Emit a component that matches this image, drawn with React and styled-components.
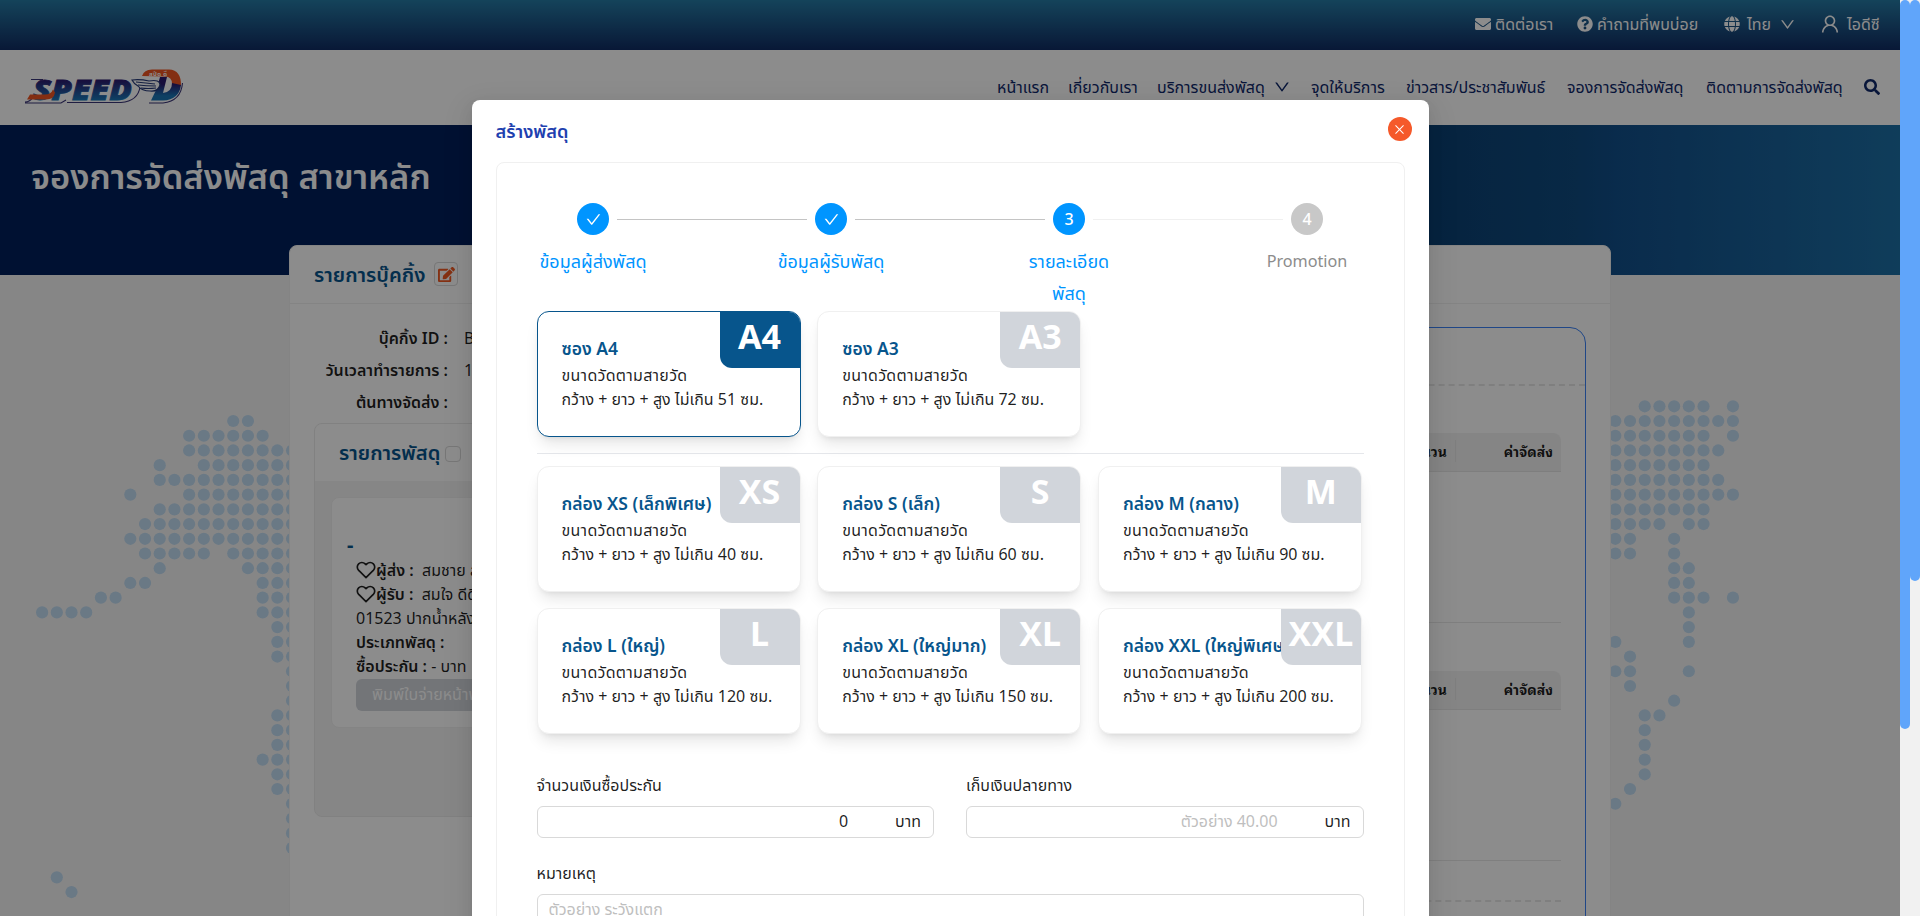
import React from "react";
import styled, { createGlobalStyle, css } from "styled-components";
import { FaEnvelope, FaQuestionCircle, FaGlobe, FaSearch, FaEdit } from "react-icons/fa";
import { AiOutlineDown, AiOutlineUser, AiOutlineCheck, AiOutlineClose } from "react-icons/ai";
import { FiHeart } from "react-icons/fi";

const Global = createGlobalStyle`
  *, *::before, *::after { box-sizing: border-box; }
  body {
    margin: 0;
    overflow: hidden;
    font-family: "Noto Sans", "Noto Sans Thai", sans-serif;
    font-size: 16px;
    color: rgba(0, 0, 0, 0.88);
  }
`;

const Shell = styled.div`
  display: flex;
  width: 1920px;
  height: 916px;
  overflow: hidden;
`;
const Page = styled.div`
  position: relative;
  width: 1900px;
  height: 916px;
  overflow: hidden;
  background: #f5f5f5;
`;

/* ---------- header ---------- */
const TopBar = styled.div`
  height: 50px;
  display: flex;
  justify-content: flex-end;
  align-items: center;
  padding: 0 20px 2px 0;
  gap: 23px;
  color: #fff;
  background: linear-gradient(180deg, #267ba5 0%, #102c63 100%);
`;
const TopItem = styled.div`
  display: flex;
  align-items: center;
  gap: ${(p) => p.$gap || 4}px;
`;
const Label = styled.span`
  display: inline-block;
  width: ${(p) => (p.$w ? p.$w + "px" : "auto")};
  white-space: nowrap;
  line-height: 24px;
`;
const NavBar = styled.div`
  height: 75px;
  display: flex;
  align-items: center;
  justify-content: space-between;
  padding: 0 20px 0 23px;
  background: #fff;
  color: #10286a;
`;
const NavLinks = styled.div`
  display: flex;
  align-items: center;
  gap: 20px;
  padding-bottom: 2px;
`;
const Hero = styled.div`
  height: 150px;
  padding: 24px 31px;
  color: #fff;
  font-size: 34.5px;
  font-weight: 600;
  line-height: 54px;
  white-space: nowrap;
  background: linear-gradient(90deg, #00205b 0%, #00205b 25%, #0b4073 75%, #0f4b80 83%, #124f8a 85%, #1d6fa5 100%);
`;

/* ---------- page body ---------- */
const DotMap = styled.svg`
  position: absolute;
  left: 0;
  top: 275px;
`;
const Booking = styled.div`
  position: relative;
  width: 1322px;
  height: 720px;
  margin: -30px 0 0 289px;
  background: #fff;
  border: 1px solid #f0f0f0;
  border-radius: 8px;
`;
const BookingHead = styled.div`
  height: 58px;
  display: flex;
  align-items: center;
  gap: 10px;
  padding: 0 0 1px 24px;
  border-bottom: 1px solid #f0f0f0;
  color: #07558c;
  font-size: 20.2px;
  font-weight: 600;
`;
const EditButton = styled.span`
  width: 24px;
  height: 24px;
  display: flex;
  align-items: center;
  justify-content: center;
  border: 1px solid #d9d9d9;
  border-radius: 4px;
  color: #f15a24;
  font-size: 17px;
`;
const Columns = styled.div`
  display: flex;
  justify-content: space-between;
  padding: 18px 24px 0 24px;
`;
const LeftCol = styled.div`
  width: 560px;
`;
const Field = styled.div`
  height: 32px;
  display: flex;
  gap: 16px;
  line-height: 32px;
  white-space: nowrap;
`;
const FieldName = styled.div`
  width: 134px;
  text-align: right;
  font-weight: 600;
`;
const ParcelBox = styled.div`
  height: 394px;
  margin-top: 5px;
  border: 1px solid #ebebeb;
  border-radius: 8px;
  background: #f5f5f5;
  overflow: hidden;
`;
const ParcelHead = styled.div`
  height: 57px;
  display: flex;
  align-items: center;
  gap: 4px;
  padding: 0 0 2px 24px;
  background: #fff;
  color: #07558c;
  font-size: 20.2px;
  font-weight: 600;
`;
const CheckBox = styled.span`
  width: 16px;
  height: 16px;
  margin-top: 4px;
  border: 1px solid #d9d9d9;
  border-radius: 4px;
`;
const Parcel = styled.div`
  height: 231px;
  margin: 16px;
  padding: 36px 23px 0;
  background: #fff;
  border: 1px solid #f0f0f0;
  border-radius: 8px;
`;
const ParcelName = styled.div`
  height: 24px;
  margin-left: -8px;
  line-height: 22px;
  font-size: 20px;
  font-weight: 700;
  color: #07558c;
`;
const Line = styled.div`
  height: 24px;
  display: flex;
  align-items: center;
  padding-left: 1px;
  line-height: 24px;
  white-space: nowrap;
  b { font-weight: 600; }
`;
const PrintButton = styled.div`
  height: 32px;
  width: 260px;
  margin: 1px 0 0 1px;
  padding-left: 16px;
  border-radius: 6px;
  background: #d1d5db;
  color: #fff;
  line-height: 30px;
  white-space: nowrap;
`;
const RightCol = styled.div`
  width: 700px;
  height: 700px;
  margin-top: 5px;
  border: 1px solid #3b82f6;
  border-radius: 16px;
`;
const Dashed = styled.div`
  height: ${(p) => p.$h}px;
  margin-right: ${(p) => p.$right || 0}px;
  border-bottom: 2px dashed #e8e8e8;
`;
const Table = styled.div`
  height: 190px;
  margin: ${(p) => p.$top}px 24px 0;
  border-bottom: 1px solid #e8e8e8;
`;
const TableHead = styled.div`
  height: 39px;
  display: flex;
  align-items: center;
  justify-content: flex-end;
  padding-bottom: 2px;
  background: #f3f3f3;
  border-bottom: 1px solid #e6e6e6;
  border-radius: 8px 8px 0 0;
  font-size: 14px;
  font-weight: 700;
  font-family: "Noto Sans Thai Looped", "Noto Serif Thai", "Loma", serif;
`;
const HeadCell = styled.div`
  width: ${(p) => p.$w}px;
  height: 22px;
  padding-right: 8px;
  text-align: right;
  line-height: 22px;
  border-right: ${(p) => (p.$line ? "1px solid #e8e8e8" : "none")};
`;

/* ---------- modal ---------- */
const Mask = styled.div`
  position: absolute;
  inset: 0;
  display: flex;
  justify-content: center;
  align-items: flex-start;
  padding-top: 100px;
  background: rgba(0, 0, 0, 0.45);
`;
const Modal = styled.div`
  width: 957px;
  height: 1100px;
  flex: none;
  padding: 16px 24px;
  border-radius: 8px;
  background: #fff;
  box-shadow: 0 6px 16px 0 rgba(0, 0, 0, 0.08), 0 3px 6px -4px rgba(0, 0, 0, 0.12), 0 9px 28px 8px rgba(0, 0, 0, 0.05);
`;
const ModalHead = styled.div`
  height: 46px;
  display: flex;
  justify-content: space-between;
  color: #1e40af;
  font-size: 18.2px;
  font-weight: 600;
  line-height: 30px;
`;
const CloseButton = styled.span`
  width: 24px;
  height: 24px;
  margin: 1px -7px 0 0;
  display: flex;
  align-items: center;
  justify-content: center;
  border-radius: 50%;
  background: #f5592a;
  color: #fff;
  font-size: 13px;
`;
const Card = styled.div`
  height: 1000px;
  padding: 40px;
  border: 1px solid #f0f0f0;
  border-radius: 8px;
`;
const Steps = styled.div`
  display: flex;
  height: 108px;
  margin-left: -1.5px;
`;
const Step = styled.div`
  width: 116px;
  margin-right: 122px;
  flex: none;
  color: ${(p) => (p.$state === "wait" ? "#8c8c8c" : "#0095ff")};
`;
const StepTop = styled.div`
  display: flex;
  align-items: center;
  width: 300px;
  gap: 8px;
  padding-left: 42px;
  margin-bottom: 10px;
`;
const StepDot = styled.span`
  width: 32px;
  height: 32px;
  display: flex;
  align-items: center;
  justify-content: center;
  border-radius: 50%;
  background: ${(p) => (p.$state === "wait" ? "#c8c8c8" : "#0095ff")};
  color: #fff;
  font-size: 16px;
  font-weight: 500;
`;
const StepLine = styled.span`
  width: 190px;
  height: 1px;
  background: ${(p) => (p.$done ? "#c4c4c4" : "#f0f0f0")};
`;
const StepText = styled.div`
  font-size: ${(p) => (p.$small ? 16.2 : 18)}px;
  line-height: ${(p) => (p.$small ? 33 : 32)}px;
  text-align: center;
  white-space: pre;
`;
const Sizes = styled.div`
  display: grid;
  grid-template-columns: repeat(3, 264px);
  gap: 16px 16.7px;
  ${(p) => p.$divided && css`
    padding-bottom: 16px;
    margin-bottom: 12px;
    border-bottom: 1px solid #e5e7eb;
  `}
`;
const SizeCard = styled.div`
  position: relative;
  height: 126px;
  padding: 23px 0 0 24px;
  background: #fff;
  border: 1px solid ${(p) => (p.$active ? "#07558c" : "#f0f0f0")};
  border-radius: 12px;
  box-shadow: 0 10px 15px -3px rgba(0, 0, 0, 0.1), 0 4px 6px -4px rgba(0, 0, 0, 0.1);
  line-height: 24px;
  white-space: nowrap;
`;
const SizeName = styled.div`
  height: 28px;
  line-height: 27px;
  color: #07558c;
  font-size: 17.5px;
  font-weight: 600;
`;
const SizeNote = styled.div`
  letter-spacing: 0.28px;
`;
const Tag = styled.div`
  position: absolute;
  top: 0;
  right: 0;
  width: 80px;
  height: 56px;
  border-radius: 0 11px 0 12px;
  background: ${(p) => (p.$active ? "#07558c" : "#d1d5db")};
  color: #fff;
  font-size: 34px;
  font-weight: 700;
  line-height: 49px;
  text-align: center;
`;
const FormRow = styled.div`
  display: flex;
  gap: 32px;
  margin-top: ${(p) => p.$top}px;
`;
const FormItem = styled.div`
  flex: 1;
`;
const FormLabel = styled.div`
  height: 37px;
  line-height: 32px;
`;
const Input = styled.div`
  height: ${(p) => p.$h || 32}px;
  display: flex;
  justify-content: ${(p) => (p.$h ? "flex-start" : "flex-end")};
  gap: 47px;
  padding: 0 12px 0 11px;
  border: 1px solid #d9d9d9;
  border-radius: 6px;
  line-height: 29px;
`;
const Hint = styled.span`
  color: #bfbfbf;
`;

/* ---------- scroll bars ---------- */
const Track = styled.div`
  width: 10px;
  height: 916px;
  background: #f1f1f1;
`;
const Thumb = styled.div`
  height: ${(p) => p.$h}px;
  border-radius: 5px;
  background: #60a5fa;
`;

const dotRows = [
  [0, "109-113,115"], [1, "13-14,107-115"], [2, "10-15,107-113,115"], [3, "10-17,107-114"],
  [4, "8,11-17,107-113"], [5, "8-17,107-114"], [6, "6,10-17,107-115"], [7, "8-17,107-113"],
  [8, "7-17,107-110,112-113"], [9, "6-17,107-108,111"], [10, "7-11,13-17,107-108,111"],
  [11, "8,14-17,111-112"], [12, "6-7,15-17,111-112"], [13, "4-5,15-17,111-113,115"],
  [14, "0-3,15-17,112"], [15, "16-17,112"], [16, "16-17,107,112"], [17, "16-17,108"],
  [18, "17,107-108,112"], [19, "17,108"], [20, "17,111"], [21, "16-17,109-110"],
  [22, "16-17,109"], [23, "16-17,109"], [24, "15-17,109"], [25, "16-17,109"],
  [26, "16-17,108"], [27, "17,107"], [28, "17"], [29, "17"], [30, "17"], [32, "1"], [33, "2"],
];
const dots = dotRows.flatMap(([row, spec]) =>
  spec.split(",").flatMap((part) => {
    const [a, b = a] = part.split("-").map(Number);
    return Array.from({ length: b - a + 1 }, (_, i) => ({ row, col: a + i }));
  })
);

function Logo() {
  return (
    <svg width="162" height="44" viewBox="0 0 162 44">
      <defs>
        <linearGradient id="ink" x1="0" y1="0" x2="0" y2="1">
          <stop offset="0.3" stopColor="#2b1a6e" />
          <stop offset="0.8" stopColor="#1b75b5" />
        </linearGradient>
      </defs>
      <path d="M2 36 Q7 36 10 31 M2 37 H38 L43 34 M44 36.500 H98 Q115 35 117 21 M126 37 H140 Q158 35 159.500 17 M8 13.500 H20" fill="none" stroke="#3a3578" strokeWidth="1.1" />
      <path d="M119 10 Q121 3.500 129 3.500 H146 Q158.500 4 158 20 L149 18 Q149 10.500 142 10.500 Z" fill="#ee5522" />
      <path d="M149 17 L158 19 Q156 34 140 34.500 H128 L134 22 L137 11 H144 L140 27 Q149 26 149 17 Z" fill="url(#ink)" />
      <path d="M109 14 q8 -1 17 1 q11 -2 11 4 q-2 7 -10 6 q-8 0 -12 -5 q-4 -2 -6 -6 Z" fill="#fff" stroke="#263a78" strokeWidth="1.2" />
      <path d="M113 16 q10 1 19 2 M115 19 q8 1 18 1 M118 22 q7 1 15 0" fill="none" stroke="#263a78" strokeWidth="1.2" />
      <text x="10" y="33.500" fontFamily="Noto Sans" fontSize="29" fontWeight="900" fontStyle="italic" textLength="99" lengthAdjust="spacingAndGlyphs" fill="url(#ink)" stroke="url(#ink)" strokeWidth="0.8">SPEED</text>
      <path d="M7 28.500 H22 q6 0 8 -5 l2 3 q-1 7 -9 7 H4 Z" fill="#ee5522" />
      <text x="126" y="9.500" fontFamily="Noto Sans Thai" fontSize="6" fontWeight="700" textLength="18" fill="#fff">สปีด ดี</text>
    </svg>
  );
}

function StepItem({ state, n, text, last, done }) {
  return (
    <Step $state={state}>
      <StepTop>
        <StepDot $state={state}>{n || <AiOutlineCheck size={17} />}</StepDot>
        {!last && <StepLine $done={done} />}
      </StepTop>
      <StepText $small={last}>{text}</StepText>
    </Step>
  );
}

function Size({ name, tag, max, active }) {
  return (
    <SizeCard $active={active}>
      <SizeName>{name}</SizeName>
      <SizeNote>ขนาดวัดตามสายวัด</SizeNote>
      <div>กว้าง + ยาว + สูง ไม่เกิน {max} ซม.</div>
      <Tag $active={active}>{tag}</Tag>
    </SizeCard>
  );
}

function CostTable({ top }) {
  return (
    <Table $top={top}>
      <TableHead>
        <HeadCell $w={100} $line>จำนวน</HeadCell>
        <HeadCell $w={105}>ค่าจัดส่ง</HeadCell>
      </TableHead>
    </Table>
  );
}

export default function App() {
  return (
    <Shell>
      <Global />
      <Page>
        <TopBar>
          <TopItem><FaEnvelope /><Label $w={59}>ติดต่อเรา</Label></TopItem>
          <TopItem><FaQuestionCircle /><Label $w={104}>คำถามที่พบบ่อย</Label></TopItem>
          <TopItem $gap={7}><FaGlobe /><Label $w={25}>ไทย</Label><AiOutlineDown size={17} /></TopItem>
          <TopItem $gap={6}><AiOutlineUser size={22} /><Label $w={33}>ไอดีซี</Label></TopItem>
        </TopBar>
        <NavBar>
          <Logo />
          <NavLinks>
            <Label $w={51}>หน้าแรก</Label>
            <Label $w={69}>เกี่ยวกับเรา</Label>
            <TopItem $gap={7}><Label $w={109}>บริการขนส่งพัสดุ</Label><AiOutlineDown size={18} /></TopItem>
            <Label $w={75}>จุดให้บริการ</Label>
            <Label $w={141}>ข่าวสาร/ประชาสัมพันธ์</Label>
            <Label $w={119}>จองการจัดส่งพัสดุ</Label>
            <Label $w={138}>ติดตามการจัดส่งพัสดุ</Label>
            <FaSearch />
          </NavLinks>
        </NavBar>
        <Hero>จองการจัดส่งพัสดุ สาขาหลัก</Hero>
        <DotMap width="1900" height="641" viewBox="0 275 1900 641" fill="#c1dcf3">
          {dots.map((d) => (
            <circle key={d.row + "-" + d.col} cx={42.1 + d.col * 14.703} cy={406.3 + d.row * 14.72} r="6.1" />
          ))}
        </DotMap>
        <Booking>
          <BookingHead>
            <Label $w={110}>รายการบุ๊คกิ้ง</Label>
            <EditButton><FaEdit /></EditButton>
          </BookingHead>
          <Columns>
            <LeftCol>
              <Field><FieldName>บุ๊คกิ้ง ID :</FieldName>BK0001523</Field>
              <Field><FieldName>วันเวลาทำรายการ :</FieldName>10/01/2024</Field>
              <Field><FieldName>ต้นทางจัดส่ง :</FieldName></Field>
              <ParcelBox>
                <ParcelHead><Label $w={102}>รายการพัสดุ</Label><CheckBox /></ParcelHead>
                <Parcel>
                  <ParcelName>-</ParcelName>
                  <Line><FiHeart size={20} /><b>ผู้ส่ง :</b>&nbsp; สมชาย ส่งดี</Line>
                  <Line><FiHeart size={20} /><b>ผู้รับ :</b>&nbsp; สมใจ ดีดี</Line>
                  <Line>01523 ปากน้ำหลังสวน</Line>
                  <Line><b>ประเภทพัสดุ :</b></Line>
                  <Line><b>ซื้อประกัน :</b>&nbsp;- บาท</Line>
                  <PrintButton>พิมพ์ใบจ่ายหน้าพัสดุ</PrintButton>
                </Parcel>
              </ParcelBox>
            </LeftCol>
            <RightCol>
              <Dashed $h={58} />
              <CostTable top={47} />
              <CostTable top={48} />
              <Dashed $h={41} $right={24} />
            </RightCol>
          </Columns>
        </Booking>
        <Mask>
          <Modal>
            <ModalHead>สร้างพัสดุ<CloseButton><AiOutlineClose /></CloseButton></ModalHead>
            <Card>
              <Steps>
                <StepItem state="done" done text="ข้อมูลผู้ส่งพัสดุ" />
                <StepItem state="done" done text="ข้อมูลผู้รับพัสดุ" />
                <StepItem state="active" n="3" text={"รายละเอียด\nพัสดุ"} />
                <StepItem state="wait" n="4" last text="Promotion" />
              </Steps>
              <Sizes $divided>
                <Size active name="ซอง A4" tag="A4" max={51} />
                <Size name="ซอง A3" tag="A3" max={72} />
              </Sizes>
              <Sizes>
                <Size name="กล่อง XS (เล็กพิเศษ)" tag="XS" max={40} />
                <Size name="กล่อง S (เล็ก)" tag="S" max={60} />
                <Size name="กล่อง M (กลาง)" tag="M" max={90} />
                <Size name="กล่อง L (ใหญ่)" tag="L" max={120} />
                <Size name="กล่อง XL (ใหญ่มาก)" tag="XL" max={150} />
                <Size name="กล่อง XXL (ใหญ่พิเศษ)" tag="XXL" max={200} />
              </Sizes>
              <FormRow $top={35}>
                <FormItem>
                  <FormLabel>จำนวนเงินซื้อประกัน</FormLabel>
                  <Input><span>0</span><span>บาท</span></Input>
                </FormItem>
                <FormItem>
                  <FormLabel>เก็บเงินปลายทาง</FormLabel>
                  <Input><Hint>ตัวอย่าง 40.00</Hint><span>บาท</span></Input>
                </FormItem>
              </FormRow>
              <FormRow $top={19}>
                <FormItem>
                  <FormLabel>หมายเหตุ</FormLabel>
                  <Input $h={96}><Hint>ตัวอย่าง ระวังแตก</Hint></Input>
                </FormItem>
              </FormRow>
            </Card>
          </Modal>
        </Mask>
      </Page>
      <Track><Thumb $h={729} /></Track>
      <Track><Thumb $h={581} /></Track>
    </Shell>
  );
}
